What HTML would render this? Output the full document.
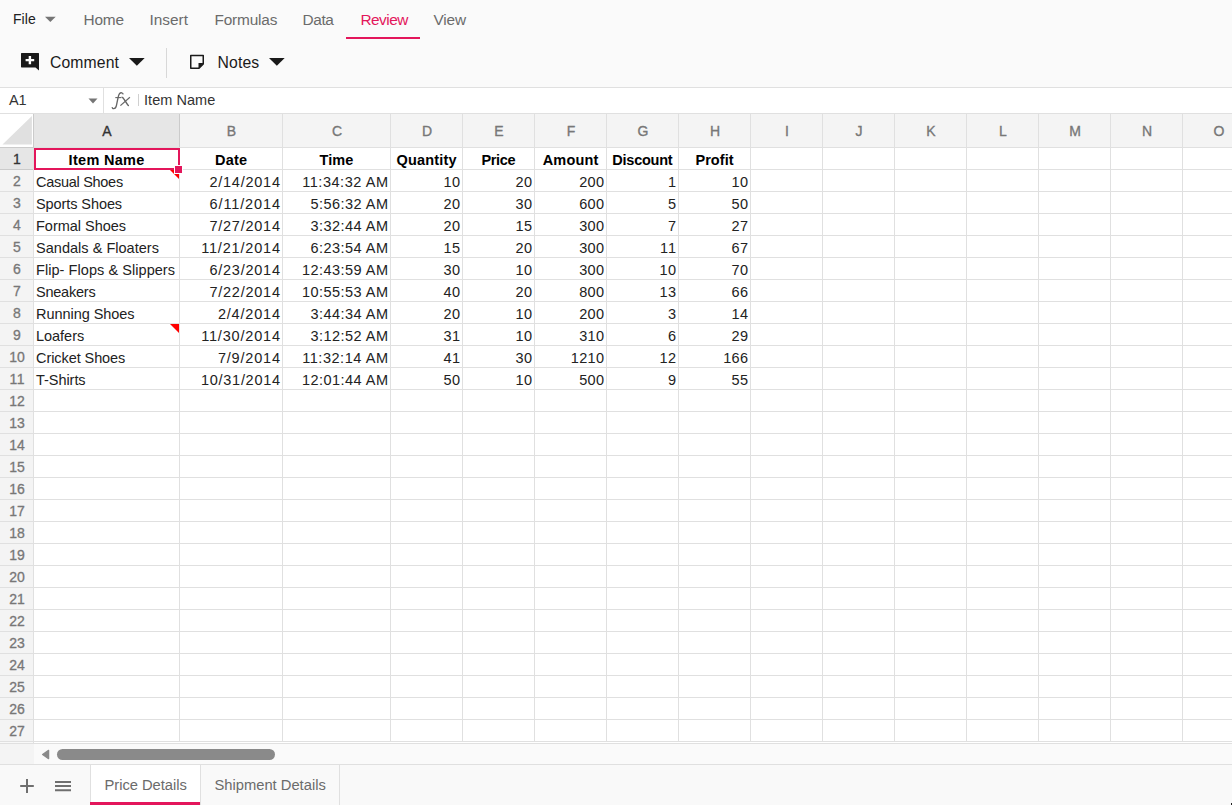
<!DOCTYPE html>
<html><head><meta charset="utf-8"><style>
*{box-sizing:border-box;margin:0;padding:0}
html,body{width:1232px;height:805px;overflow:hidden;background:#fafafa;font-family:"Liberation Sans",sans-serif;position:relative}
.a{position:absolute}
.t{position:absolute;white-space:pre;line-height:20px;height:20px}
.hl{position:absolute;height:1px;background:#e0e0e0}
.vl{position:absolute;width:1px;background:#e0e0e0}
</style></head><body>

<svg class="a" style="left:45px;top:16px" width="11" height="7" viewBox="0 0 11 7"><path d="M0 0.8 L10.7 0.8 L5.35 6 Z" fill="#757575"/></svg>
<div class="a" style="left:346px;top:37px;width:74px;height:2px;background:#e3165b"></div>
<svg class="a" style="left:21px;top:53px" width="19" height="18" viewBox="0 0 19 18">
<path d="M0.6 0 H17.4 A0.6 0.6 0 0 1 18 0.6 V17.5 L14.5 14.4 H0.6 A0.6 0.6 0 0 1 0 13.8 V0.6 A0.6 0.6 0 0 1 0.6 0 Z" fill="#1a1a1a"/>
<path d="M7.7 2.9 H10.1 V5.9 H13.2 V8.3 H10.1 V11.3 H7.7 V8.3 H4.6 V5.9 H7.7 Z" fill="#fff"/></svg>
<svg class="a" style="left:129px;top:57px" width="16" height="9" viewBox="0 0 16 9"><path d="M0 0.9 H15.7 L7.85 8.7 Z" fill="#1a1a1a"/></svg>
<div class="a" style="left:166px;top:48px;width:1px;height:30px;background:#d8d8d8"></div>
<svg class="a" style="left:189px;top:54px" width="16" height="16" viewBox="0 0 16 16">
<path d="M1.75 1.5 H14.25 V10 L10 14.25 H1.75 Z" fill="none" stroke="#1a1a1a" stroke-width="1.5" stroke-linejoin="round"/>
<path d="M9.5 9 H14.6 L9.5 14.6 Z" fill="#1a1a1a"/></svg>
<svg class="a" style="left:269px;top:57px" width="16" height="9" viewBox="0 0 16 9"><path d="M0 0.9 H15.7 L7.85 8.7 Z" fill="#1a1a1a"/></svg>
<div class="a" style="left:0;top:87px;width:1232px;height:1px;background:#e0e0e0"></div>
<div class="a" style="left:0;top:88px;width:1232px;height:25px;background:#fff"></div>
<svg class="a" style="left:88px;top:98px" width="10" height="6" viewBox="0 0 10 6"><path d="M0.5 0.5 H9.5 L5 5.5 Z" fill="#757575"/></svg>
<div class="a" style="left:103px;top:88px;width:1px;height:25px;background:#e0e0e0"></div>
<svg class="a" style="left:106px;top:88px" width="30" height="24" viewBox="0 0 30 24" fill="none" stroke="#666"><path d="M17.2 6.4 C16.8 4.6 14.8 4.3 13.6 5.5 C12.7 6.5 12.3 8.3 11.9 10.4 L10.4 17.6 C10 19.6 8.9 20.6 7.7 20.6 C6.7 20.6 6.2 20 6.3 19.2" stroke-width="1.35"/><path d="M9.3 9.6 H15.3" stroke-width="1.1"/><path d="M15.6 9.2 C16.6 9.2 17.2 9.8 17.8 10.8 L21.4 16.4 C21.9 17.2 22.4 17.6 23 17.6" stroke-width="1.45"/><path d="M23.9 9.2 L14.4 17.6" stroke-width="1.2"/></svg>
<div class="a" style="left:138px;top:94px;width:1px;height:12px;background:#d0d0d0"></div>
<div class="a" style="left:0;top:113px;width:1232px;height:628px;background:#fff"></div>
<div class="a" style="left:0;top:114px;width:1232px;height:33px;background:#f4f4f4"></div>
<div class="a" style="left:34px;top:114px;width:145px;height:33px;background:#e6e6e6"></div>
<div class="a" style="left:0;top:148px;width:33px;height:593px;background:#f4f4f4"></div>
<div class="a" style="left:0;top:148px;width:33px;height:21px;background:#e6e6e6"></div>
<div class="a" style="left:0;top:114px;width:33px;height:33px;background:#fff"></div>
<svg class="a" style="left:0;top:114px" width="33" height="33" viewBox="0 0 33 33"><path d="M2.5 30.6 L31.9 2.1 V30.6 Z" fill="#e0e0e0"/></svg>
<div class="hl" style="left:0;top:113px;width:1232px"></div>
<div class="hl" style="left:0;top:147px;width:1232px"></div>
<div class="hl" style="left:0;top:169px;width:1232px"></div>
<div class="hl" style="left:0;top:191px;width:1232px"></div>
<div class="hl" style="left:0;top:213px;width:1232px"></div>
<div class="hl" style="left:0;top:235px;width:1232px"></div>
<div class="hl" style="left:0;top:257px;width:1232px"></div>
<div class="hl" style="left:0;top:279px;width:1232px"></div>
<div class="hl" style="left:0;top:301px;width:1232px"></div>
<div class="hl" style="left:0;top:323px;width:1232px"></div>
<div class="hl" style="left:0;top:345px;width:1232px"></div>
<div class="hl" style="left:0;top:367px;width:1232px"></div>
<div class="hl" style="left:0;top:389px;width:1232px"></div>
<div class="hl" style="left:0;top:411px;width:1232px"></div>
<div class="hl" style="left:0;top:433px;width:1232px"></div>
<div class="hl" style="left:0;top:455px;width:1232px"></div>
<div class="hl" style="left:0;top:477px;width:1232px"></div>
<div class="hl" style="left:0;top:499px;width:1232px"></div>
<div class="hl" style="left:0;top:521px;width:1232px"></div>
<div class="hl" style="left:0;top:543px;width:1232px"></div>
<div class="hl" style="left:0;top:565px;width:1232px"></div>
<div class="hl" style="left:0;top:587px;width:1232px"></div>
<div class="hl" style="left:0;top:609px;width:1232px"></div>
<div class="hl" style="left:0;top:631px;width:1232px"></div>
<div class="hl" style="left:0;top:653px;width:1232px"></div>
<div class="hl" style="left:0;top:675px;width:1232px"></div>
<div class="hl" style="left:0;top:697px;width:1232px"></div>
<div class="hl" style="left:0;top:719px;width:1232px"></div>
<div class="hl" style="left:0;top:741px;width:1232px"></div>
<div class="vl" style="left:33px;top:113px;height:629px"></div>
<div class="vl" style="left:179px;top:113px;height:629px"></div>
<div class="vl" style="left:282px;top:113px;height:629px"></div>
<div class="vl" style="left:390px;top:113px;height:629px"></div>
<div class="vl" style="left:462px;top:113px;height:629px"></div>
<div class="vl" style="left:534px;top:113px;height:629px"></div>
<div class="vl" style="left:606px;top:113px;height:629px"></div>
<div class="vl" style="left:678px;top:113px;height:629px"></div>
<div class="vl" style="left:750px;top:113px;height:629px"></div>
<div class="vl" style="left:822px;top:113px;height:629px"></div>
<div class="vl" style="left:894px;top:113px;height:629px"></div>
<div class="vl" style="left:966px;top:113px;height:629px"></div>
<div class="vl" style="left:1038px;top:113px;height:629px"></div>
<div class="vl" style="left:1110px;top:113px;height:629px"></div>
<div class="vl" style="left:1182px;top:113px;height:629px"></div>
<div class="a" style="left:179px;top:114px;width:1px;height:33px;background:#cbcbcb"></div>
<div class="a" style="left:0;top:169px;width:33px;height:1px;background:#cbcbcb"></div>
<div class="a" style="left:33px;top:114px;width:1px;height:34px;background:#cbcbcb"></div>
<div class="a" style="left:0;top:147px;width:33px;height:1px;background:#cbcbcb"></div>
<div class="t" style="top:9px;font-size:14px;letter-spacing:0.051px;color:#212121;left:13px;">File</div>
<div class="t" style="top:10px;font-size:15.4px;letter-spacing:-0.172px;color:#6b6b6b;left:83.5px;">Home</div>
<div class="t" style="top:10px;font-size:15.4px;letter-spacing:-0.013px;color:#6b6b6b;left:149.5px;">Insert</div>
<div class="t" style="top:10px;font-size:15.4px;letter-spacing:-0.174px;color:#6b6b6b;left:214.5px;">Formulas</div>
<div class="t" style="top:10px;font-size:15.4px;letter-spacing:-0.359px;color:#6b6b6b;left:302.5px;">Data</div>
<div class="t" style="top:10px;font-size:15.4px;letter-spacing:-0.536px;color:#e3165b;left:360.5px;">Review</div>
<div class="t" style="top:10px;font-size:15.4px;letter-spacing:-0.164px;color:#6b6b6b;left:433.5px;">View</div>
<div class="t" style="top:53px;font-size:15.75px;letter-spacing:0.112px;color:#1a1a1a;left:50px;">Comment</div>
<div class="t" style="top:53px;font-size:15.75px;letter-spacing:0.141px;color:#1a1a1a;left:217.5px;">Notes</div>
<div class="t" style="top:90px;font-size:14.5px;letter-spacing:-0.070px;color:#333;left:9px;">A1</div>
<div class="t" style="top:90px;font-size:14.5px;letter-spacing:0.045px;color:#333;left:144px;">Item Name</div>
<div class="t" style="top:121px;font-size:14px;letter-spacing:-0.047px;color:#333;left:102.33px;-webkit-text-stroke:0.35px;">A</div>
<div class="t" style="top:121px;font-size:14px;letter-spacing:-0.500px;color:#777;left:226.83px;-webkit-text-stroke:0.35px;">B</div>
<div class="t" style="top:121px;font-size:14px;letter-spacing:-0.984px;color:#777;left:331.94px;-webkit-text-stroke:0.35px;">C</div>
<div class="t" style="top:121px;font-size:14px;letter-spacing:-0.984px;color:#777;left:421.94px;-webkit-text-stroke:0.35px;">D</div>
<div class="t" style="top:121px;font-size:14px;letter-spacing:-1.422px;color:#777;left:494.33px;-webkit-text-stroke:0.35px;">E</div>
<div class="t" style="top:121px;font-size:14px;letter-spacing:-0.844px;color:#777;left:566.72px;-webkit-text-stroke:0.35px;">F</div>
<div class="t" style="top:121px;font-size:14px;letter-spacing:-1.344px;color:#777;left:637.55px;-webkit-text-stroke:0.35px;">G</div>
<div class="t" style="top:121px;font-size:14px;letter-spacing:-0.188px;color:#777;left:709.94px;-webkit-text-stroke:0.35px;">H</div>
<div class="t" style="top:121px;font-size:14px;letter-spacing:0.078px;color:#777;left:785.05px;-webkit-text-stroke:0.35px;">I</div>
<div class="t" style="top:121px;font-size:14px;letter-spacing:0.781px;color:#777;left:855.50px;-webkit-text-stroke:0.35px;">J</div>
<div class="t" style="top:121px;font-size:14px;letter-spacing:-0.484px;color:#777;left:926.33px;-webkit-text-stroke:0.35px;">K</div>
<div class="t" style="top:121px;font-size:14px;letter-spacing:-0.234px;color:#777;left:999.10px;-webkit-text-stroke:0.35px;">L</div>
<div class="t" style="top:121px;font-size:14px;letter-spacing:0.578px;color:#777;left:1069.16px;-webkit-text-stroke:0.35px;">M</div>
<div class="t" style="top:121px;font-size:14px;letter-spacing:-0.188px;color:#777;left:1141.94px;-webkit-text-stroke:0.35px;">N</div>
<div class="t" style="top:121px;font-size:14px;letter-spacing:-1.234px;color:#777;left:1213.55px;-webkit-text-stroke:0.35px;">O</div>
<div class="t" style="top:149px;font-size:14px;letter-spacing:0.078px;color:#333;left:13.10px;-webkit-text-stroke:0.3px;">1</div>
<div class="t" style="top:171px;font-size:14px;letter-spacing:0.078px;color:#777;left:13.10px;-webkit-text-stroke:0.3px;">2</div>
<div class="t" style="top:193px;font-size:14px;letter-spacing:0.078px;color:#777;left:13.10px;-webkit-text-stroke:0.3px;">3</div>
<div class="t" style="top:215px;font-size:14px;letter-spacing:0.078px;color:#777;left:13.10px;-webkit-text-stroke:0.3px;">4</div>
<div class="t" style="top:237px;font-size:14px;letter-spacing:0.078px;color:#777;left:13.10px;-webkit-text-stroke:0.3px;">5</div>
<div class="t" style="top:259px;font-size:14px;letter-spacing:0.078px;color:#777;left:13.10px;-webkit-text-stroke:0.3px;">6</div>
<div class="t" style="top:281px;font-size:14px;letter-spacing:0.078px;color:#777;left:13.10px;-webkit-text-stroke:0.3px;">7</div>
<div class="t" style="top:303px;font-size:14px;letter-spacing:0.078px;color:#777;left:13.10px;-webkit-text-stroke:0.3px;">8</div>
<div class="t" style="top:325px;font-size:14px;letter-spacing:0.078px;color:#777;left:13.10px;-webkit-text-stroke:0.3px;">9</div>
<div class="t" style="top:347px;font-size:14px;letter-spacing:0.086px;color:#777;left:9.17px;-webkit-text-stroke:0.3px;">10</div>
<div class="t" style="top:369px;font-size:14px;letter-spacing:0.602px;color:#777;left:9.43px;-webkit-text-stroke:0.3px;">11</div>
<div class="t" style="top:391px;font-size:14px;letter-spacing:0.086px;color:#777;left:9.17px;-webkit-text-stroke:0.3px;">12</div>
<div class="t" style="top:413px;font-size:14px;letter-spacing:0.086px;color:#777;left:9.17px;-webkit-text-stroke:0.3px;">13</div>
<div class="t" style="top:435px;font-size:14px;letter-spacing:0.086px;color:#777;left:9.17px;-webkit-text-stroke:0.3px;">14</div>
<div class="t" style="top:457px;font-size:14px;letter-spacing:0.086px;color:#777;left:9.17px;-webkit-text-stroke:0.3px;">15</div>
<div class="t" style="top:479px;font-size:14px;letter-spacing:0.086px;color:#777;left:9.17px;-webkit-text-stroke:0.3px;">16</div>
<div class="t" style="top:501px;font-size:14px;letter-spacing:0.086px;color:#777;left:9.17px;-webkit-text-stroke:0.3px;">17</div>
<div class="t" style="top:523px;font-size:14px;letter-spacing:0.086px;color:#777;left:9.17px;-webkit-text-stroke:0.3px;">18</div>
<div class="t" style="top:545px;font-size:14px;letter-spacing:0.086px;color:#777;left:9.17px;-webkit-text-stroke:0.3px;">19</div>
<div class="t" style="top:567px;font-size:14px;letter-spacing:0.086px;color:#777;left:9.17px;-webkit-text-stroke:0.3px;">20</div>
<div class="t" style="top:589px;font-size:14px;letter-spacing:0.086px;color:#777;left:9.17px;-webkit-text-stroke:0.3px;">21</div>
<div class="t" style="top:611px;font-size:14px;letter-spacing:0.086px;color:#777;left:9.17px;-webkit-text-stroke:0.3px;">22</div>
<div class="t" style="top:633px;font-size:14px;letter-spacing:0.086px;color:#777;left:9.17px;-webkit-text-stroke:0.3px;">23</div>
<div class="t" style="top:655px;font-size:14px;letter-spacing:0.086px;color:#777;left:9.17px;-webkit-text-stroke:0.3px;">24</div>
<div class="t" style="top:677px;font-size:14px;letter-spacing:0.086px;color:#777;left:9.17px;-webkit-text-stroke:0.3px;">25</div>
<div class="t" style="top:699px;font-size:14px;letter-spacing:0.086px;color:#777;left:9.17px;-webkit-text-stroke:0.3px;">26</div>
<div class="t" style="top:721px;font-size:14px;letter-spacing:0.086px;color:#777;left:9.17px;-webkit-text-stroke:0.3px;">27</div>
<div class="t" style="top:150px;font-size:14.5px;letter-spacing:0.309px;color:#000;font-weight:700;left:68.59px;">Item Name</div>
<div class="t" style="top:150px;font-size:14.5px;letter-spacing:0.195px;color:#000;font-weight:700;left:214.99px;">Date</div>
<div class="t" style="top:150px;font-size:14.5px;letter-spacing:0.090px;color:#000;font-weight:700;left:319.57px;">Time</div>
<div class="t" style="top:150px;font-size:14.5px;letter-spacing:0.176px;color:#000;font-weight:700;left:396.48px;">Quantity</div>
<div class="t" style="top:150px;font-size:14.5px;letter-spacing:-0.312px;color:#000;font-weight:700;left:481.38px;">Price</div>
<div class="t" style="top:150px;font-size:14.5px;letter-spacing:0.135px;color:#000;font-weight:700;left:542.78px;">Amount</div>
<div class="t" style="top:150px;font-size:14.5px;letter-spacing:-0.252px;color:#000;font-weight:700;left:612.37px;">Discount</div>
<div class="t" style="top:150px;font-size:14.5px;letter-spacing:0.055px;color:#000;font-weight:700;left:695.43px;">Profit</div>
<div class="t" style="top:172px;font-size:14.5px;letter-spacing:-0.285px;color:#222;left:36px;">Casual Shoes</div>
<div class="t" style="top:172px;font-size:14.5px;letter-spacing:0.753px;color:#222;right:951.25px;">2/14/2014</div>
<div class="t" style="top:172px;font-size:14.5px;letter-spacing:0.550px;color:#222;right:843.45px;">11:34:32 AM</div>
<div class="t" style="top:172px;font-size:14.5px;letter-spacing:0.297px;color:#222;right:771.70px;">10</div>
<div class="t" style="top:172px;font-size:14.5px;letter-spacing:0.297px;color:#222;right:699.70px;">20</div>
<div class="t" style="top:172px;font-size:14.5px;letter-spacing:0.297px;color:#222;right:627.70px;">200</div>
<div class="t" style="top:172px;font-size:14.5px;letter-spacing:0.297px;color:#222;right:555.70px;">1</div>
<div class="t" style="top:172px;font-size:14.5px;letter-spacing:0.297px;color:#222;right:483.70px;">10</div>
<div class="t" style="top:194px;font-size:14.5px;letter-spacing:-0.086px;color:#222;left:36px;">Sports Shoes</div>
<div class="t" style="top:194px;font-size:14.5px;letter-spacing:0.873px;color:#222;right:951.13px;">6/11/2014</div>
<div class="t" style="top:194px;font-size:14.5px;letter-spacing:0.467px;color:#222;right:843.53px;">5:56:32 AM</div>
<div class="t" style="top:194px;font-size:14.5px;letter-spacing:0.297px;color:#222;right:771.70px;">20</div>
<div class="t" style="top:194px;font-size:14.5px;letter-spacing:0.297px;color:#222;right:699.70px;">30</div>
<div class="t" style="top:194px;font-size:14.5px;letter-spacing:0.297px;color:#222;right:627.70px;">600</div>
<div class="t" style="top:194px;font-size:14.5px;letter-spacing:0.297px;color:#222;right:555.70px;">5</div>
<div class="t" style="top:194px;font-size:14.5px;letter-spacing:0.297px;color:#222;right:483.70px;">50</div>
<div class="t" style="top:216px;font-size:14.5px;letter-spacing:-0.020px;color:#222;left:36px;">Formal Shoes</div>
<div class="t" style="top:216px;font-size:14.5px;letter-spacing:0.753px;color:#222;right:951.25px;">7/27/2014</div>
<div class="t" style="top:216px;font-size:14.5px;letter-spacing:0.467px;color:#222;right:843.53px;">3:32:44 AM</div>
<div class="t" style="top:216px;font-size:14.5px;letter-spacing:0.297px;color:#222;right:771.70px;">20</div>
<div class="t" style="top:216px;font-size:14.5px;letter-spacing:0.297px;color:#222;right:699.70px;">15</div>
<div class="t" style="top:216px;font-size:14.5px;letter-spacing:0.297px;color:#222;right:627.70px;">300</div>
<div class="t" style="top:216px;font-size:14.5px;letter-spacing:0.297px;color:#222;right:555.70px;">7</div>
<div class="t" style="top:216px;font-size:14.5px;letter-spacing:0.297px;color:#222;right:483.70px;">27</div>
<div class="t" style="top:238px;font-size:14.5px;letter-spacing:0.027px;color:#222;left:36px;">Sandals &amp; Floaters</div>
<div class="t" style="top:238px;font-size:14.5px;letter-spacing:0.816px;color:#222;right:951.18px;">11/21/2014</div>
<div class="t" style="top:238px;font-size:14.5px;letter-spacing:0.467px;color:#222;right:843.53px;">6:23:54 AM</div>
<div class="t" style="top:238px;font-size:14.5px;letter-spacing:0.297px;color:#222;right:771.70px;">15</div>
<div class="t" style="top:238px;font-size:14.5px;letter-spacing:0.297px;color:#222;right:699.70px;">20</div>
<div class="t" style="top:238px;font-size:14.5px;letter-spacing:0.297px;color:#222;right:627.70px;">300</div>
<div class="t" style="top:238px;font-size:14.5px;letter-spacing:0.836px;color:#222;right:555.16px;">11</div>
<div class="t" style="top:238px;font-size:14.5px;letter-spacing:0.297px;color:#222;right:483.70px;">67</div>
<div class="t" style="top:260px;font-size:14.5px;letter-spacing:0.058px;color:#222;left:36px;">Flip- Flops &amp; Slippers</div>
<div class="t" style="top:260px;font-size:14.5px;letter-spacing:0.753px;color:#222;right:951.25px;">6/23/2014</div>
<div class="t" style="top:260px;font-size:14.5px;letter-spacing:0.453px;color:#222;right:843.55px;">12:43:59 AM</div>
<div class="t" style="top:260px;font-size:14.5px;letter-spacing:0.297px;color:#222;right:771.70px;">30</div>
<div class="t" style="top:260px;font-size:14.5px;letter-spacing:0.297px;color:#222;right:699.70px;">10</div>
<div class="t" style="top:260px;font-size:14.5px;letter-spacing:0.297px;color:#222;right:627.70px;">300</div>
<div class="t" style="top:260px;font-size:14.5px;letter-spacing:0.297px;color:#222;right:555.70px;">10</div>
<div class="t" style="top:260px;font-size:14.5px;letter-spacing:0.297px;color:#222;right:483.70px;">70</div>
<div class="t" style="top:282px;font-size:14.5px;letter-spacing:-0.225px;color:#222;left:36px;">Sneakers</div>
<div class="t" style="top:282px;font-size:14.5px;letter-spacing:0.753px;color:#222;right:951.25px;">7/22/2014</div>
<div class="t" style="top:282px;font-size:14.5px;letter-spacing:0.453px;color:#222;right:843.55px;">10:55:53 AM</div>
<div class="t" style="top:282px;font-size:14.5px;letter-spacing:0.297px;color:#222;right:771.70px;">40</div>
<div class="t" style="top:282px;font-size:14.5px;letter-spacing:0.297px;color:#222;right:699.70px;">20</div>
<div class="t" style="top:282px;font-size:14.5px;letter-spacing:0.297px;color:#222;right:627.70px;">800</div>
<div class="t" style="top:282px;font-size:14.5px;letter-spacing:0.297px;color:#222;right:555.70px;">13</div>
<div class="t" style="top:282px;font-size:14.5px;letter-spacing:0.297px;color:#222;right:483.70px;">66</div>
<div class="t" style="top:304px;font-size:14.5px;letter-spacing:-0.048px;color:#222;left:36px;">Running Shoes</div>
<div class="t" style="top:304px;font-size:14.5px;letter-spacing:0.811px;color:#222;right:951.19px;">2/4/2014</div>
<div class="t" style="top:304px;font-size:14.5px;letter-spacing:0.467px;color:#222;right:843.53px;">3:44:34 AM</div>
<div class="t" style="top:304px;font-size:14.5px;letter-spacing:0.297px;color:#222;right:771.70px;">20</div>
<div class="t" style="top:304px;font-size:14.5px;letter-spacing:0.297px;color:#222;right:699.70px;">10</div>
<div class="t" style="top:304px;font-size:14.5px;letter-spacing:0.297px;color:#222;right:627.70px;">200</div>
<div class="t" style="top:304px;font-size:14.5px;letter-spacing:0.297px;color:#222;right:555.70px;">3</div>
<div class="t" style="top:304px;font-size:14.5px;letter-spacing:0.297px;color:#222;right:483.70px;">14</div>
<div class="t" style="top:326px;font-size:14.5px;letter-spacing:-0.025px;color:#222;left:36px;">Loafers</div>
<div class="t" style="top:326px;font-size:14.5px;letter-spacing:0.816px;color:#222;right:951.18px;">11/30/2014</div>
<div class="t" style="top:326px;font-size:14.5px;letter-spacing:0.467px;color:#222;right:843.53px;">3:12:52 AM</div>
<div class="t" style="top:326px;font-size:14.5px;letter-spacing:0.297px;color:#222;right:771.70px;">31</div>
<div class="t" style="top:326px;font-size:14.5px;letter-spacing:0.297px;color:#222;right:699.70px;">10</div>
<div class="t" style="top:326px;font-size:14.5px;letter-spacing:0.297px;color:#222;right:627.70px;">310</div>
<div class="t" style="top:326px;font-size:14.5px;letter-spacing:0.297px;color:#222;right:555.70px;">6</div>
<div class="t" style="top:326px;font-size:14.5px;letter-spacing:0.297px;color:#222;right:483.70px;">29</div>
<div class="t" style="top:348px;font-size:14.5px;letter-spacing:-0.076px;color:#222;left:36px;">Cricket Shoes</div>
<div class="t" style="top:348px;font-size:14.5px;letter-spacing:0.811px;color:#222;right:951.19px;">7/9/2014</div>
<div class="t" style="top:348px;font-size:14.5px;letter-spacing:0.550px;color:#222;right:843.45px;">11:32:14 AM</div>
<div class="t" style="top:348px;font-size:14.5px;letter-spacing:0.297px;color:#222;right:771.70px;">41</div>
<div class="t" style="top:348px;font-size:14.5px;letter-spacing:0.297px;color:#222;right:699.70px;">30</div>
<div class="t" style="top:348px;font-size:14.5px;letter-spacing:0.297px;color:#222;right:627.70px;">1210</div>
<div class="t" style="top:348px;font-size:14.5px;letter-spacing:0.297px;color:#222;right:555.70px;">12</div>
<div class="t" style="top:348px;font-size:14.5px;letter-spacing:0.297px;color:#222;right:483.70px;">166</div>
<div class="t" style="top:370px;font-size:14.5px;letter-spacing:-0.047px;color:#222;left:36px;">T-Shirts</div>
<div class="t" style="top:370px;font-size:14.5px;letter-spacing:0.708px;color:#222;right:951.29px;">10/31/2014</div>
<div class="t" style="top:370px;font-size:14.5px;letter-spacing:0.453px;color:#222;right:843.55px;">12:01:44 AM</div>
<div class="t" style="top:370px;font-size:14.5px;letter-spacing:0.297px;color:#222;right:771.70px;">50</div>
<div class="t" style="top:370px;font-size:14.5px;letter-spacing:0.297px;color:#222;right:699.70px;">10</div>
<div class="t" style="top:370px;font-size:14.5px;letter-spacing:0.297px;color:#222;right:627.70px;">500</div>
<div class="t" style="top:370px;font-size:14.5px;letter-spacing:0.297px;color:#222;right:555.70px;">9</div>
<div class="t" style="top:370px;font-size:14.5px;letter-spacing:0.297px;color:#222;right:483.70px;">55</div>
<div class="a" style="left:34px;top:148px;width:146px;height:22px;border:2px solid #e3165b"></div>
<svg class="a" style="left:170px;top:170px" width="9" height="9" viewBox="0 0 9 9"><path d="M0 0 H9 V9 Z" fill="#ff0000"/></svg>
<svg class="a" style="left:170px;top:324px" width="9" height="9" viewBox="0 0 9 9"><path d="M0 0 H9 V9 Z" fill="#ff0000"/></svg>
<div class="a" style="left:174px;top:165px;width:9px;height:9px;background:#e3165b;border:1px solid #fff"></div>
<div class="a" style="left:34px;top:742px;width:1198px;height:1px;background:#fff"></div>
<div class="a" style="left:0;top:742px;width:33px;height:1px;background:#f8f8f8"></div>
<div class="vl" style="left:33px;top:741px;height:3px"></div>
<div class="hl" style="left:0;top:743px;width:1232px"></div>
<div class="a" style="left:0;top:744px;width:34px;height:20px;background:#f4f4f4"></div>
<div class="a" style="left:34px;top:744px;width:1198px;height:20px;background:#fafafa"></div>
<svg class="a" style="left:41px;top:749px" width="10" height="11" viewBox="0 0 10 11"><path d="M7.6 1.4 V9.6 L1.6 5.5 Z" fill="#8a8a8a" stroke="#8a8a8a" stroke-width="1.3" stroke-linejoin="round"/></svg>
<div class="a" style="left:57px;top:749px;width:218px;height:11px;border-radius:5.5px;background:#8a8a8a"></div>
<div class="hl" style="left:0;top:764px;width:1232px"></div>
<div class="a" style="left:0;top:765px;width:1232px;height:40px;background:#f9f9f9"></div>
<svg class="a" style="left:19px;top:778px" width="16" height="16" viewBox="0 0 16 16"><path d="M8 1 V15 M1.2 8 H14.8" stroke="#6f6f6f" stroke-width="2"/></svg>
<svg class="a" style="left:55px;top:781px" width="16" height="11" viewBox="0 0 16 11"><path d="M0 1 H16 M0 5 H16 M0 9.2 H16" stroke="#6f6f6f" stroke-width="2"/></svg>
<div class="a" style="left:90px;top:765px;width:110px;height:40px;background:#fff"></div>
<div class="vl" style="left:90px;top:765px;height:40px"></div>
<div class="vl" style="left:200px;top:765px;height:40px"></div>
<div class="vl" style="left:339px;top:765px;height:40px"></div>
<div class="a" style="left:90px;top:802px;width:110px;height:3px;background:#e3165b"></div>
<div class="t" style="top:775px;font-size:14.75px;letter-spacing:-0.043px;color:#6b6b6b;left:104.5px;">Price Details</div>
<div class="t" style="top:775px;font-size:14.75px;letter-spacing:-0.014px;color:#6b6b6b;left:214.5px;">Shipment Details</div>
<div class="a" style="left:1231px;top:803px;width:1px;height:2px;background:#222"></div>
</body></html>
